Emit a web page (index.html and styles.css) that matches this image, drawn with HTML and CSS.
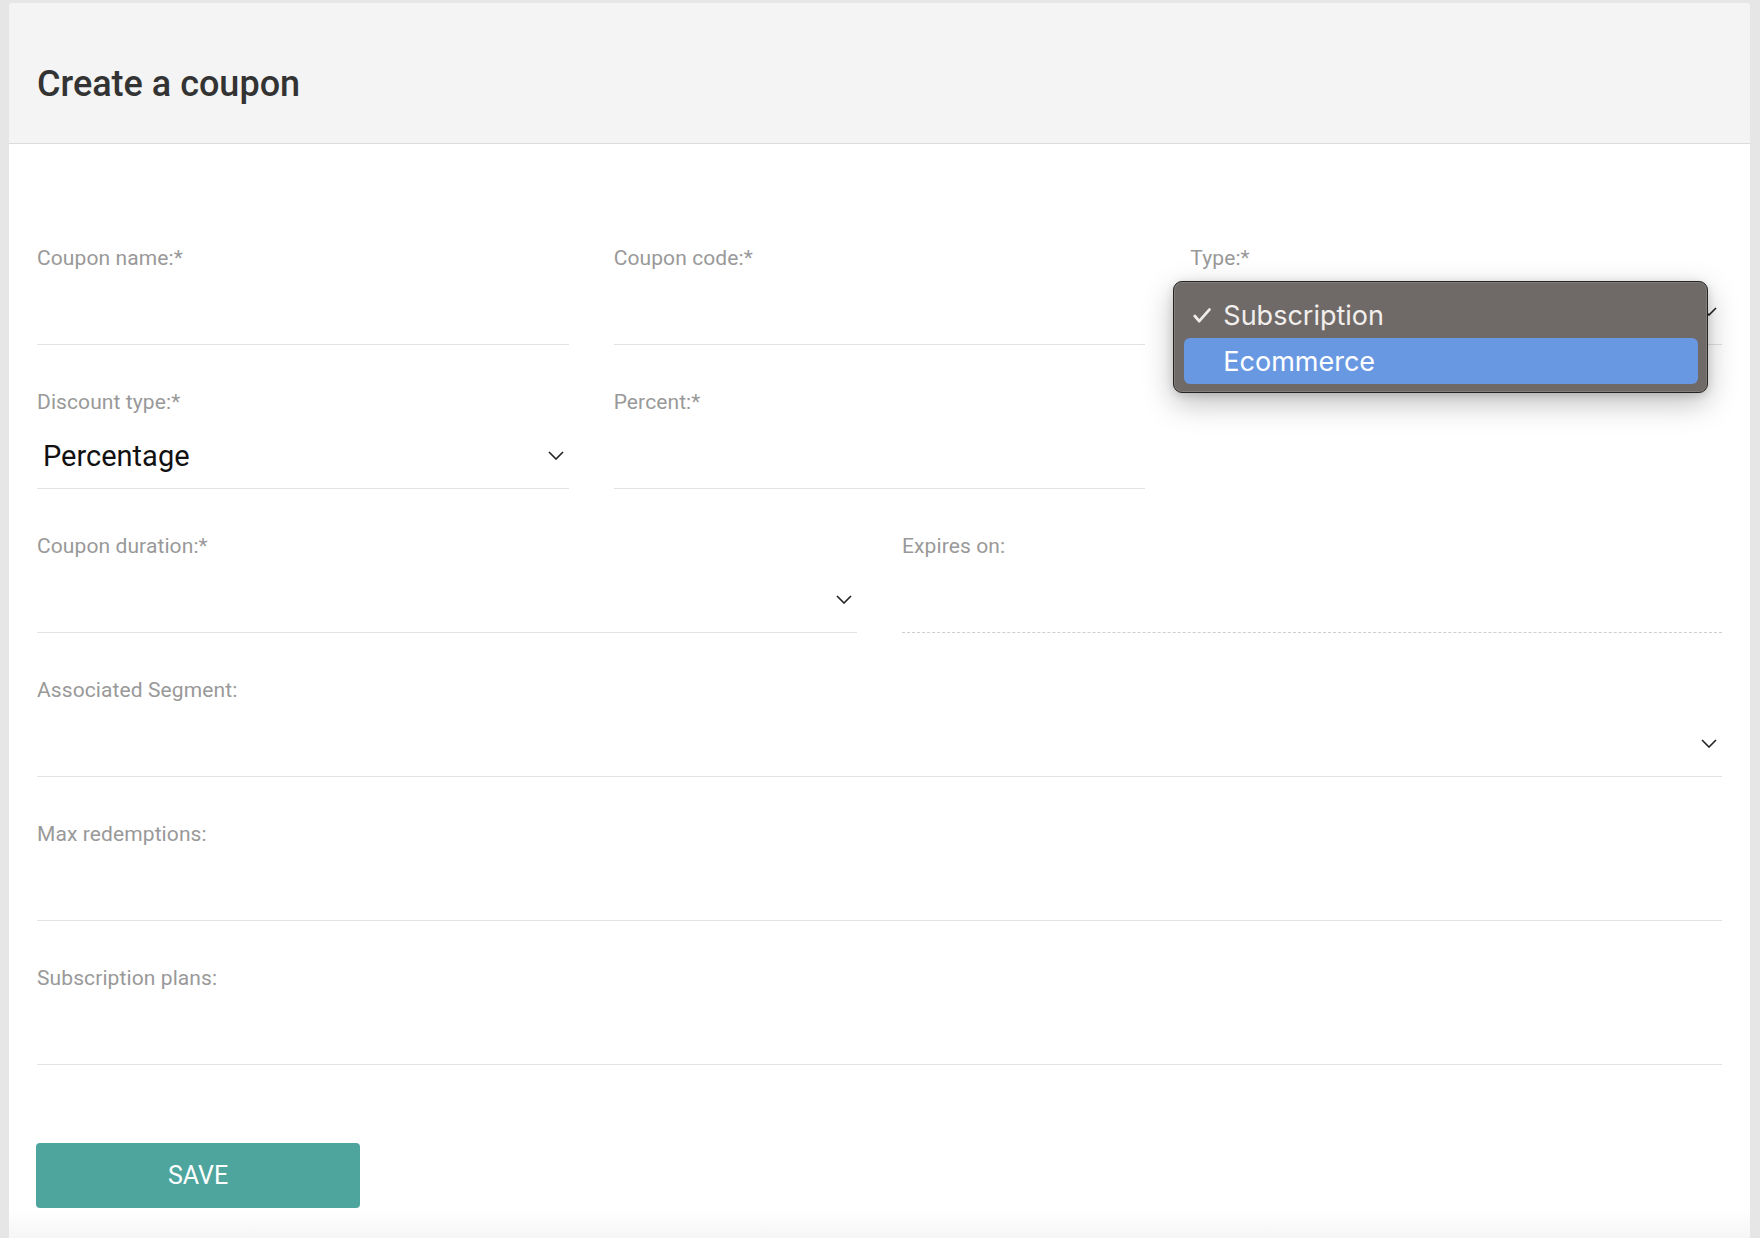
FILE: index.html
```html
<!DOCTYPE html>
<html lang="en">
<head>
<meta charset="utf-8">
<title>Create a coupon</title>
<link rel="stylesheet" href="styles.css">
</head>
<body>
<div class="card">
  <header class="head"><h1 class="title">Create a coupon</h1></header>
  <form class="form">
    <div class="fields">
      <div class="row cols-3">
        <div class="field"><label class="label">Coupon name:*</label><div class="control"></div></div>
        <div class="field"><label class="label">Coupon code:*</label><div class="control"></div></div>
        <div class="field type">
          <label class="label">Type:*</label>
          <div class="control select">
            <span class="value"></span>
            <svg class="chev" width="16" height="9" viewBox="0 0 16 9"><path d="M1 1 L8 8 L15 1" fill="none" stroke="#222" stroke-width="1.6"/></svg>
          </div>
          <div class="menu">
            <div class="item">
              <span class="check"><svg width="18" height="15" viewBox="0 0 18 15"><path d="M1.8 8 L6.2 13.2 L16.4 1.6" fill="none" stroke="#efedeb" stroke-width="2.8" stroke-linecap="round" stroke-linejoin="round"/></svg></span>
              <span class="item-text">Subscription</span>
            </div>
            <div class="item active">
              <span class="check"></span>
              <span class="item-text">Ecommerce</span>
            </div>
          </div>
        </div>
      </div>
      <div class="row cols-3">
        <div class="field">
          <label class="label">Discount type:*</label>
          <div class="control select">
            <span class="value">Percentage</span>
            <svg class="chev" width="16" height="9" viewBox="0 0 16 9"><path d="M1 1 L8 8 L15 1" fill="none" stroke="#222" stroke-width="1.6"/></svg>
          </div>
        </div>
        <div class="field"><label class="label">Percent:*</label><div class="control"></div></div>
        <div class="field empty"></div>
      </div>
      <div class="row cols-2">
        <div class="field">
          <label class="label">Coupon duration:*</label>
          <div class="control select">
            <span class="value"></span>
            <svg class="chev" width="16" height="9" viewBox="0 0 16 9"><path d="M1 1 L8 8 L15 1" fill="none" stroke="#222" stroke-width="1.6"/></svg>
          </div>
        </div>
        <div class="field"><label class="label">Expires on:</label><div class="control dashed"></div></div>
      </div>
      <div class="row">
        <div class="field">
          <label class="label">Associated Segment:</label>
          <div class="control select">
            <span class="value"></span>
            <svg class="chev" width="16" height="9" viewBox="0 0 16 9"><path d="M1 1 L8 8 L15 1" fill="none" stroke="#222" stroke-width="1.6"/></svg>
          </div>
        </div>
      </div>
      <div class="row">
        <div class="field"><label class="label">Max redemptions:</label><div class="control"></div></div>
      </div>
      <div class="row">
        <div class="field"><label class="label">Subscription plans:</label><div class="control"></div></div>
      </div>
    </div>
    <div class="actions"><button type="button" class="save">SAVE</button></div>
  </form>
  <div class="foot"></div>
</div>
</body>
</html>
```

FILE: styles.css
```css
* { box-sizing: border-box; }
html, body { margin: 0; padding: 0; }
body {
  background: #e5e6e5;
  padding: 3px 10px 0 9px;
  font-family: Roboto, "Liberation Sans", Arial, sans-serif;
  overflow: hidden;
  height: 1238px;
}
.card {
  background: #fff;
  border-radius: 4px 4px 0 0;
  min-height: 1235px;
  display: flex;
  flex-direction: column;
}
.head {
  background: #f4f4f4;
  border-bottom: 1px solid #dcdcdc;
  border-radius: 4px 4px 0 0;
  padding: 60px 28px 38px;
}
.title {
  margin: 0;
  font-size: 36px;
  line-height: 42px;
  font-weight: 500;
  color: #333;
}
.form {
  padding: 102px 28px 0;
}
.fields {
  display: flex;
  flex-direction: column;
  gap: 45px;
}
.row { display: grid; grid-template-columns: 1fr; column-gap: 45px; }
.row.cols-3 { grid-template-columns: repeat(3, 1fr); }
.row.cols-2 { grid-template-columns: repeat(2, 1fr); }
.field { position: relative; }
.label {
  display: block;
  font-size: 21px;
  line-height: 24px;
  letter-spacing: 0.1px;
  color: #999;
}
.control {
  height: 75px;
  border-bottom: 1px solid #e2e2e2;
}
.control.dashed { border-bottom: 1px dashed #cfcfcf; }
.control.select {
  display: flex;
  justify-content: space-between;
  align-items: flex-start;
  padding: 0 5px 0 6px;
}
.value {
  margin-top: 25px;
  font-size: 29px;
  line-height: 35px;
  color: #111;
}
.chev { margin-top: 37px; flex: none; }
.menu {
  position: absolute;
  top: 35px;
  left: -17px;
  width: 535px;
  height: 112px;
  background: #6f6a67;
  border: 1px solid #252321;
  border-radius: 9px;
  box-shadow: inset 0 0 0 1px rgba(255,255,255,0.14), 0 10px 30px rgba(0,0,0,0.26), 0 2px 8px rgba(0,0,0,0.14);
  padding: 10px 9px 8px 10px;
  font-family: Inter, "Noto Sans", sans-serif;
}
.item {
  height: 46px;
  display: flex;
  align-items: center;
  border-radius: 6px;
  color: #f1efed;
  font-size: 27px;
}
.item.active { background: #6998e2; color: #fff; }
.check {
  width: 39px;
  padding-left: 9px;
  display: flex;
  align-items: center;
  flex: none;
}
.actions { margin-top: 78px; }
.save {
  display: block;
  width: 324px;
  height: 65px;
  margin-left: -1px;
  border: 0;
  border-radius: 4px;
  background: #4ea59d;
  color: #fff;
  font-family: Roboto, "Liberation Sans", Arial, sans-serif;
  font-size: 25px;
  padding: 0;
  cursor: pointer;
}
.foot {
  flex: 1;
  min-height: 30px;
  background: linear-gradient(#ffffff, #f6f6f6);
}
```
